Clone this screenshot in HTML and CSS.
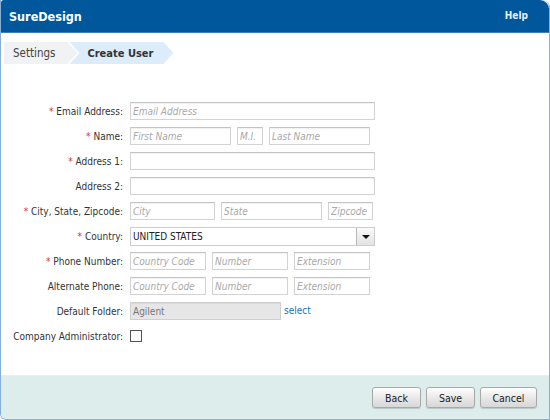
FILE: index.html
```html
<!DOCTYPE html>
<html lang="en">
<head>
    <meta charset="UTF-8">
    <title>SureDesign - Create User</title>
    <link rel="stylesheet" href="styles.css">
</head>
<body>
    <div class="window">
        <div class="header">
            <div class="brand">SureDesign</div>
            <a class="help" href="#">Help</a>
        </div>

        <div class="crumbs">
            <div class="crumb">Settings</div>
            <div class="crumb current">Create User</div>
        </div>

        <form class="form">
            <label class="req">Email Address:</label>
            <div class="fields"><input type="text" class="w245" placeholder="Email Address"></div>

            <label class="req">Name:</label>
            <div class="fields">
                <input type="text" class="w101" placeholder="First Name">
                <input type="text" class="w26" placeholder="M.I.">
                <input type="text" class="w101" placeholder="Last Name">
            </div>

            <label class="req">Address 1:</label>
            <div class="fields"><input type="text" class="w245"></div>

            <label>Address 2:</label>
            <div class="fields"><input type="text" class="w245"></div>

            <label class="req">City, State, Zipcode:</label>
            <div class="fields">
                <input type="text" class="w85" placeholder="City">
                <input type="text" class="w101" placeholder="State">
                <input type="text" class="w45" placeholder="Zipcode">
            </div>

            <label class="req">Country:</label>
            <div class="fields">
                <div class="select">
                    <span class="select-value">UNITED STATES</span>
                    <span class="select-btn"></span>
                </div>
            </div>

            <label class="req">Phone Number:</label>
            <div class="fields">
                <input type="text" class="w76" placeholder="Country Code">
                <input type="text" class="w76" placeholder="Number">
                <input type="text" class="w76" placeholder="Extension">
            </div>

            <label>Alternate Phone:</label>
            <div class="fields">
                <input type="text" class="w76" placeholder="Country Code">
                <input type="text" class="w76" placeholder="Number">
                <input type="text" class="w76" placeholder="Extension">
            </div>

            <label>Default Folder:</label>
            <div class="fields">
                <input type="text" class="w151 readonly" value="Agilent" readonly>
                <a class="link" href="#">select</a>
            </div>

            <label>Company Administrator:</label>
            <div class="fields"><input type="checkbox" class="check"></div>
        </form>

        <div class="footer">
            <button type="button">Back</button>
            <button type="button">Save</button>
            <button type="button" class="wide">Cancel</button>
        </div>
    </div>
</body>
</html>
```

FILE: styles.css
```css
* {
    box-sizing: border-box;
}

body {
    margin: 0;
    font-family: "DejaVu Sans Condensed", "DejaVu Sans", sans-serif;
    font-size: 10px;
    color: #333;
    background: #fff;
}

.window {
    width: 550px;
    height: 420px;
    display: flex;
    flex-direction: column;
    border: 1px solid #86b0d6;
    border-top: none;
    border-radius: 0 8px 0 6px;
    overflow: hidden;
}

.header {
    height: 33px;
    background: #00579b;
    border-bottom: 1px solid #3d7fb8;
    border-radius: 3px 9px 0 0;
    display: flex;
    align-items: center;
    justify-content: space-between;
    padding: 0 21px 0 8px;
    color: #fff;
}

.brand {
    font-weight: bold;
    font-size: 12.5px;
}

.help {
    color: #e6edf5;
    font-weight: bold;
    font-size: 10px;
    text-decoration: none;
    margin-bottom: 2px;
}

.crumbs {
    display: flex;
    margin: 9px 0 0 3px;
    height: 22px;
}

.crumb {
    display: flex;
    align-items: center;
    height: 22px;
    padding: 0 22px 0 9px;
    background: #f1f2f3;
    font-size: 11.5px;
    color: #444;
    clip-path: polygon(0 0, calc(100% - 10px) 0, 100% 50%, calc(100% - 10px) 100%, 0 100%);
}

.crumb.current {
    margin-left: -8px;
    padding: 0 20px 0 18px;
    background: #dcecfb;
    font-size: 11px;
    font-weight: bold;
    color: #333;
    clip-path: polygon(0 0, calc(100% - 10px) 0, 100% 50%, calc(100% - 10px) 100%, 0 100%, 10px 50%);
}

.form {
    flex: 1;
    display: grid;
    grid-template-columns: 122px 1fr;
    grid-auto-rows: 18px;
    column-gap: 7px;
    row-gap: 7px;
    align-content: start;
    padding-top: 38px;
}

.form label {
    text-align: right;
    align-self: center;
    white-space: nowrap;
    color: #333;
}

.form label.req::before {
    content: "* ";
    color: #e0303a;
}

.fields {
    display: flex;
    align-items: center;
    gap: 6px;
}

input[type="text"] {
    height: 18px;
    border: 1px solid #d3d3d3;
    border-top-color: #c4c4c4;
    box-shadow: inset 0 1px 1px rgba(0,0,0,0.06);
    padding: 0 2px;
    font-family: inherit;
    font-size: 10px;
    color: #333;
    background: #fff;
    margin: 0;
}

input::placeholder {
    font-style: italic;
    color: #a8a8a8;
}

.w245 { width: 245px; }
.w151 { width: 151px; }
.w101 { width: 101px; }
.w85 { width: 85px; }
.w76 { width: 76px; }
.w45 { width: 45px; }
.w26 { width: 26px; }

.readonly {
    background: #e6e6e6 !important;
    color: #777 !important;
    border-color: #cfcfcf !important;
}

.link {
    color: #1a6fc4;
    text-decoration: none;
    margin-left: -3px;
    margin-top: -2px;
}

.select {
    width: 245px;
    height: 19px;
    display: flex;
    border: 1px solid #cdcdcd;
    background: #fff;
    margin-top: 1px;
}

.select-value {
    flex: 1;
    padding: 0 2px;
    line-height: 17px;
    color: #222;
}

.select-btn {
    width: 18px;
    border-left: 1px solid #b8b8b8;
    background: linear-gradient(#fafafa, #e2e2e2);
    display: flex;
    align-items: center;
    justify-content: center;
}

.select-btn::after {
    content: "";
    border-left: 4px solid transparent;
    border-right: 4px solid transparent;
    border-top: 4px solid #111;
}

.check {
    appearance: none;
    width: 12px;
    height: 12px;
    margin: 0;
    border: 1px solid #555;
    background: #fff;
}

.footer {
    height: 44px;
    background: #dcedec;
    border-top: 1px solid #e9efef;
    display: flex;
    justify-content: flex-end;
    gap: 5px;
    padding: 11px 12px 0 0;
}

button {
    height: 21px;
    width: 49px;
    padding: 0;
    border: 1px solid #a9a9a9;
    border-radius: 3px;
    background: linear-gradient(#ffffff, #e9e9e9 50%, #d7d7d7);
    box-shadow: 0 1px 1px rgba(0,0,0,0.15);
    font-family: inherit;
    font-size: 10.5px;
    color: #222;
    cursor: pointer;
}

button.wide {
    width: 57px;
}
```
